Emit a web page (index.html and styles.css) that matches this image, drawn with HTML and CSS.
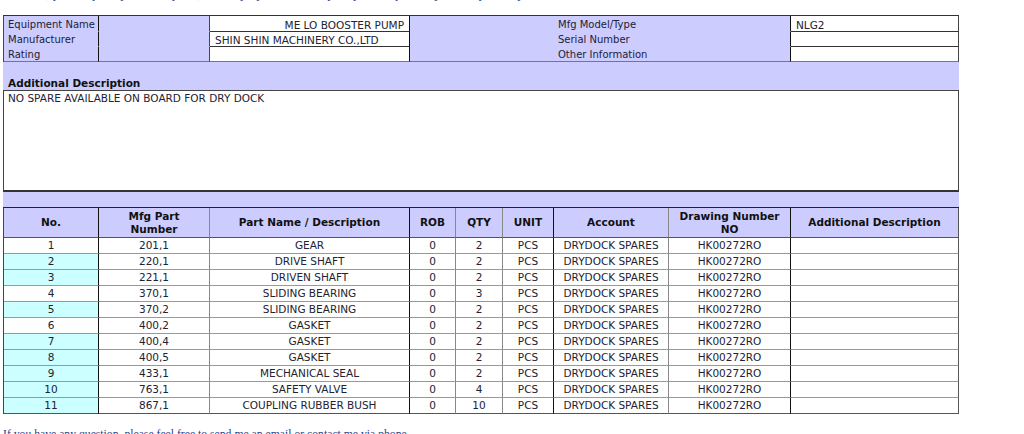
FILE: index.html
```html
<!DOCTYPE html>
<html>
<head>
<meta charset="utf-8">
<link rel="stylesheet" href="styles.css">
</head>
<body>
<div class="page">
  <p class="intro">Dear Sir, please quote your best price, delivery by return, for spare parts required by the ship for dry dock.</p>

  <table class="equip">
    <tr class="r1">
      <td class="e1 lav">Equipment Name</td>
      <td class="e2 lav"></td>
      <td class="e3 val right">ME LO BOOSTER PUMP</td>
      <td class="e4 lav">Mfg Model/Type</td>
      <td class="e5 val">NLG2</td>
    </tr>
    <tr class="r2">
      <td class="e1 lav">Manufacturer</td>
      <td class="e2 lav"></td>
      <td class="e3 val">SHIN SHIN MACHINERY CO.,LTD</td>
      <td class="e4 lav">Serial Number</td>
      <td class="e5 val"></td>
    </tr>
    <tr class="r3">
      <td class="e1 lav last">Rating</td>
      <td class="e2 lav last"></td>
      <td class="e3 val last"></td>
      <td class="e4 lav last">Other Information</td>
      <td class="e5 val last"></td>
    </tr>
  </table>

  <div class="band">Additional Description</div>
  <div class="desc">NO SPARE AVAILABLE ON BOARD FOR DRY DOCK</div>
  <div class="band2"></div>

  <table class="parts">
    <thead>
      <tr>
        <th class="c1">No.</th>
        <th class="c2">Mfg Part<br>Number</th>
        <th class="c3">Part Name / Description</th>
        <th class="c4">ROB</th>
        <th class="c5">QTY</th>
        <th class="c6">UNIT</th>
        <th class="c7">Account</th>
        <th class="c8">Drawing Number<br>NO</th>
        <th class="c9">Additional Description</th>
      </tr>
    </thead>
    <tbody>
      <tr><td class="no">1</td><td>201,1</td><td>GEAR</td><td>0</td><td>2</td><td>PCS</td><td>DRYDOCK SPARES</td><td>HK00272RO</td><td></td></tr>
      <tr><td class="no alt">2</td><td>220,1</td><td>DRIVE SHAFT</td><td>0</td><td>2</td><td>PCS</td><td>DRYDOCK SPARES</td><td>HK00272RO</td><td></td></tr>
      <tr><td class="no alt">3</td><td>221,1</td><td>DRIVEN SHAFT</td><td>0</td><td>2</td><td>PCS</td><td>DRYDOCK SPARES</td><td>HK00272RO</td><td></td></tr>
      <tr><td class="no">4</td><td>370,1</td><td>SLIDING BEARING</td><td>0</td><td>3</td><td>PCS</td><td>DRYDOCK SPARES</td><td>HK00272RO</td><td></td></tr>
      <tr><td class="no alt">5</td><td>370,2</td><td>SLIDING BEARING</td><td>0</td><td>2</td><td>PCS</td><td>DRYDOCK SPARES</td><td>HK00272RO</td><td></td></tr>
      <tr><td class="no">6</td><td>400,2</td><td>GASKET</td><td>0</td><td>2</td><td>PCS</td><td>DRYDOCK SPARES</td><td>HK00272RO</td><td></td></tr>
      <tr><td class="no alt">7</td><td>400,4</td><td>GASKET</td><td>0</td><td>2</td><td>PCS</td><td>DRYDOCK SPARES</td><td>HK00272RO</td><td></td></tr>
      <tr><td class="no alt">8</td><td>400,5</td><td>GASKET</td><td>0</td><td>2</td><td>PCS</td><td>DRYDOCK SPARES</td><td>HK00272RO</td><td></td></tr>
      <tr><td class="no alt">9</td><td>433,1</td><td>MECHANICAL SEAL</td><td>0</td><td>2</td><td>PCS</td><td>DRYDOCK SPARES</td><td>HK00272RO</td><td></td></tr>
      <tr><td class="no alt">10</td><td>763,1</td><td>SAFETY VALVE</td><td>0</td><td>4</td><td>PCS</td><td>DRYDOCK SPARES</td><td>HK00272RO</td><td></td></tr>
      <tr><td class="no alt">11</td><td>867,1</td><td>COUPLING RUBBER BUSH</td><td>0</td><td>10</td><td>PCS</td><td>DRYDOCK SPARES</td><td>HK00272RO</td><td></td></tr>
    </tbody>
  </table>

  <p class="outro">If you have any question, please feel free to send me an email or contact me via phone.</p>
</div>
</body>
</html>
```

FILE: styles.css
```css
html, body {
  margin: 0;
  padding: 0;
  background: #ffffff;
  overflow: hidden;
}

.page {
  padding-left: 3px;
  width: 956px;
  font-family: "DejaVu Sans", Verdana, sans-serif;
  font-size: 10.5px;
  color: #222233;
}

.intro {
  margin: -14px 0 14px 0;
  height: 15px;
  font-family: "Liberation Serif", serif;
  font-size: 13px;
  line-height: 15px;
  color: #2a3f8f;
  white-space: nowrap;
}

/* ---------- equipment table ---------- */
.equip {
  border-collapse: separate;
  border-spacing: 0;
  table-layout: fixed;
  width: 956px;
  border-top: 1px solid #333;
  border-left: 1px solid #444;
}

.equip td {
  box-sizing: border-box;
  padding: 2px 5px 0 5px;
  line-height: 12px;
  white-space: nowrap;
  overflow: hidden;
  vertical-align: middle;
  border-bottom: 1px solid transparent;
}

.equip .r1 td { height: 16px; }
.equip .r2 td { height: 15px; }
.equip .r3 td { height: 15px; }

.equip .lav { background: #ccccff; font-size: 10px; }
.equip .val { background: #ffffff; border-bottom-color: #333; }
.equip td.last { border-bottom: 1px solid #777; }

.equip .e1 { width: 95px; border-right: 1px solid #111; padding-left: 4px; padding-right: 0; }
.equip .e2 { width: 111px; border-right: 1px solid #444; }
.equip .e3 { width: 200px; border-right: 1px solid #111; }
.equip .e4 { width: 381px; border-right: 1px solid #111; padding-left: 148px; }
.equip .e5 { width: 168px; border-right: 1px solid #444; }

.equip .right { text-align: right; }

/* ---------- description ---------- */
.band {
  box-sizing: border-box;
  height: 28px;
  width: 956px;
  background: #ccccff;
  font-weight: bold;
  padding: 0 0 0 5px;
  display: flex;
  align-items: flex-end;
  line-height: 13px;
  color: #111;
}

.desc {
  box-sizing: border-box;
  height: 102px;
  width: 956px;
  background: #ffffff;
  border: 1px solid #444;
  border-bottom: 2px solid #333;
  padding: 1px 4px 0 4px;
  line-height: 12px;
}

.band2 {
  height: 15px;
  width: 956px;
  background: #ccccff;
}

/* ---------- parts table ---------- */
.parts {
  border-collapse: separate;
  border-spacing: 0;
  table-layout: fixed;
  width: 956px;
  border-top: 1px solid #222;
  border-left: 1px solid #444;
}

.parts th {
  box-sizing: border-box;
  height: 30px;
  background: #ccccff;
  font-weight: bold;
  line-height: 13px;
  padding: 0;
  text-align: center;
  vertical-align: middle;
  border-bottom: 1px solid #555;
  border-right: 1px solid #888;
  color: #111;
  white-space: nowrap;
}

.parts th.c1 { width: 95px; border-right-color: #111; }
.parts th.c2 { width: 111px; }
.parts th.c3 { width: 200px; border-right-color: #111; }
.parts th.c4 { width: 46px; }
.parts th.c5 { width: 47px; }
.parts th.c6 { width: 51px; border-right-color: #111; }
.parts th.c7 { width: 115px; }
.parts th.c8 { width: 122px; border-right-color: #111; }
.parts th.c9 { width: 168px; border-right-color: #555; }

.parts td {
  box-sizing: border-box;
  height: 16px;
  padding: 0;
  line-height: 13px;
  text-align: center;
  vertical-align: middle;
  background: #ffffff;
  border-bottom: 1px solid #999;
  border-right: 1px solid #888;
  white-space: nowrap;
}

.parts td:nth-child(1),
.parts td:nth-child(3),
.parts td:nth-child(6),
.parts td:nth-child(8) { border-right-color: #111; }
.parts td:nth-child(9) { border-right-color: #555; }
.parts tbody tr:last-child td { border-bottom-color: #555; }

.parts td.alt { background: #ccffff; }

/* ---------- footer text ---------- */
.outro {
  margin: 14px 0 0 0;
  font-family: "Liberation Serif", serif;
  font-size: 11.7px;
  line-height: 14px;
  color: #2a3f8f;
  white-space: nowrap;
}
```
